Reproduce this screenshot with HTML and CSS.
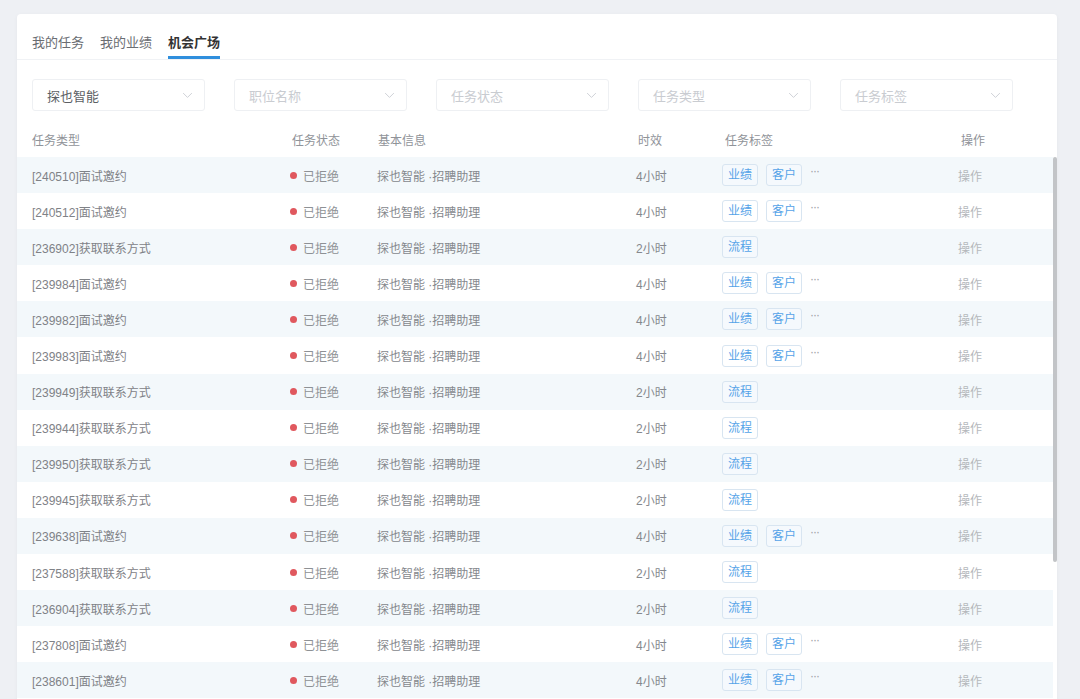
FILE: index.html
```html
<!DOCTYPE html>
<html lang="zh">
<head>
<meta charset="utf-8">
<link rel="stylesheet" href="styles.css">
</head>
<body>
<div class="card">
  <div class="tabs">
    <div class="tab">我的任务</div>
    <div class="tab">我的业绩</div>
    <div class="tab active">机会广场</div>
  </div>
  <div class="filters">
    <div class="select filled"><span>探也智能</span><svg class="chev" viewBox="0 0 12 8" width="11" height="7"><path d="M1 1.2 6 6.2 11 1.2" fill="none" stroke="#c8ccd1" stroke-width="1"/></svg></div>
    <div class="select"><span>职位名称</span><svg class="chev" viewBox="0 0 12 8" width="11" height="7"><path d="M1 1.2 6 6.2 11 1.2" fill="none" stroke="#c8ccd1" stroke-width="1"/></svg></div>
    <div class="select"><span>任务状态</span><svg class="chev" viewBox="0 0 12 8" width="11" height="7"><path d="M1 1.2 6 6.2 11 1.2" fill="none" stroke="#c8ccd1" stroke-width="1"/></svg></div>
    <div class="select"><span>任务类型</span><svg class="chev" viewBox="0 0 12 8" width="11" height="7"><path d="M1 1.2 6 6.2 11 1.2" fill="none" stroke="#c8ccd1" stroke-width="1"/></svg></div>
    <div class="select"><span>任务标签</span><svg class="chev" viewBox="0 0 12 8" width="11" height="7"><path d="M1 1.2 6 6.2 11 1.2" fill="none" stroke="#c8ccd1" stroke-width="1"/></svg></div>
  </div>
  <div class="thead">
    <div class="th">任务类型</div>
    <div class="th">任务状态</div>
    <div class="th">基本信息</div>
    <div class="th">时效</div>
    <div class="th">任务标签</div>
    <div class="th">操作</div>
  </div>
  <div class="tbody">
    <div class="rows">
      <div class="row alt"><div class="td type">[240510]面试邀约</div><div class="td status"><i class="dot"></i>已拒绝</div><div class="td info">探也智能 ·招聘助理</div><div class="td time">4小时</div><div class="td tags"><span class="tag">业绩</span><span class="tag">客户</span><span class="more">···</span></div><div class="td act">操作</div></div>
      <div class="row"><div class="td type">[240512]面试邀约</div><div class="td status"><i class="dot"></i>已拒绝</div><div class="td info">探也智能 ·招聘助理</div><div class="td time">4小时</div><div class="td tags"><span class="tag">业绩</span><span class="tag">客户</span><span class="more">···</span></div><div class="td act">操作</div></div>
      <div class="row alt"><div class="td type">[236902]获取联系方式</div><div class="td status"><i class="dot"></i>已拒绝</div><div class="td info">探也智能 ·招聘助理</div><div class="td time">2小时</div><div class="td tags"><span class="tag">流程</span></div><div class="td act">操作</div></div>
      <div class="row"><div class="td type">[239984]面试邀约</div><div class="td status"><i class="dot"></i>已拒绝</div><div class="td info">探也智能 ·招聘助理</div><div class="td time">4小时</div><div class="td tags"><span class="tag">业绩</span><span class="tag">客户</span><span class="more">···</span></div><div class="td act">操作</div></div>
      <div class="row alt"><div class="td type">[239982]面试邀约</div><div class="td status"><i class="dot"></i>已拒绝</div><div class="td info">探也智能 ·招聘助理</div><div class="td time">4小时</div><div class="td tags"><span class="tag">业绩</span><span class="tag">客户</span><span class="more">···</span></div><div class="td act">操作</div></div>
      <div class="row"><div class="td type">[239983]面试邀约</div><div class="td status"><i class="dot"></i>已拒绝</div><div class="td info">探也智能 ·招聘助理</div><div class="td time">4小时</div><div class="td tags"><span class="tag">业绩</span><span class="tag">客户</span><span class="more">···</span></div><div class="td act">操作</div></div>
      <div class="row alt"><div class="td type">[239949]获取联系方式</div><div class="td status"><i class="dot"></i>已拒绝</div><div class="td info">探也智能 ·招聘助理</div><div class="td time">2小时</div><div class="td tags"><span class="tag">流程</span></div><div class="td act">操作</div></div>
      <div class="row"><div class="td type">[239944]获取联系方式</div><div class="td status"><i class="dot"></i>已拒绝</div><div class="td info">探也智能 ·招聘助理</div><div class="td time">2小时</div><div class="td tags"><span class="tag">流程</span></div><div class="td act">操作</div></div>
      <div class="row alt"><div class="td type">[239950]获取联系方式</div><div class="td status"><i class="dot"></i>已拒绝</div><div class="td info">探也智能 ·招聘助理</div><div class="td time">2小时</div><div class="td tags"><span class="tag">流程</span></div><div class="td act">操作</div></div>
      <div class="row"><div class="td type">[239945]获取联系方式</div><div class="td status"><i class="dot"></i>已拒绝</div><div class="td info">探也智能 ·招聘助理</div><div class="td time">2小时</div><div class="td tags"><span class="tag">流程</span></div><div class="td act">操作</div></div>
      <div class="row alt"><div class="td type">[239638]面试邀约</div><div class="td status"><i class="dot"></i>已拒绝</div><div class="td info">探也智能 ·招聘助理</div><div class="td time">4小时</div><div class="td tags"><span class="tag">业绩</span><span class="tag">客户</span><span class="more">···</span></div><div class="td act">操作</div></div>
      <div class="row"><div class="td type">[237588]获取联系方式</div><div class="td status"><i class="dot"></i>已拒绝</div><div class="td info">探也智能 ·招聘助理</div><div class="td time">2小时</div><div class="td tags"><span class="tag">流程</span></div><div class="td act">操作</div></div>
      <div class="row alt"><div class="td type">[236904]获取联系方式</div><div class="td status"><i class="dot"></i>已拒绝</div><div class="td info">探也智能 ·招聘助理</div><div class="td time">2小时</div><div class="td tags"><span class="tag">流程</span></div><div class="td act">操作</div></div>
      <div class="row"><div class="td type">[237808]面试邀约</div><div class="td status"><i class="dot"></i>已拒绝</div><div class="td info">探也智能 ·招聘助理</div><div class="td time">4小时</div><div class="td tags"><span class="tag">业绩</span><span class="tag">客户</span><span class="more">···</span></div><div class="td act">操作</div></div>
      <div class="row alt"><div class="td type">[238601]面试邀约</div><div class="td status"><i class="dot"></i>已拒绝</div><div class="td info">探也智能 ·招聘助理</div><div class="td time">4小时</div><div class="td tags"><span class="tag">业绩</span><span class="tag">客户</span><span class="more">···</span></div><div class="td act">操作</div></div>
    </div>
    <div class="scrollbar"></div>
  </div>
</div>
</body>
</html>
```

FILE: styles.css
```css
html, body {
  margin: 0;
  padding: 0;
  height: 699px;
  overflow: hidden;
  background: #eef0f4;
  font-family: "Liberation Sans", "Noto Sans CJK SC", sans-serif;
}

.card {
  margin: 14px 23px 0 17px;
  background: #fff;
  border-radius: 4px 4px 0 0;
  box-shadow: 0 1px 4px rgba(0, 0, 0, 0.04);
  height: 700px;
}

.tabs {
  display: flex;
  gap: 15px;
  padding: 0 15px;
  height: 46px;
  border-bottom: 1px solid #f0f2f5;
  box-sizing: border-box;
}

.tab {
  font-size: 13px;
  line-height: 20px;
  color: #6a6d72;
  padding-top: 19px;
  height: 45px;
  box-sizing: border-box;
  border-bottom: 3px solid transparent;
}

.tab + .tab {
  margin-left: 1px;
}

.tab.active {
  color: #333;
  font-weight: bold;
  border-bottom-color: #2f8fdd;
}

.filters {
  display: flex;
  gap: 29px;
  padding: 19px 15px 0;
}

.select {
  width: 173px;
  height: 32px;
  box-sizing: border-box;
  border: 1px solid #eef0f3;
  border-radius: 3px;
  display: flex;
  align-items: center;
  justify-content: space-between;
  padding: 0 11px 0 14px;
  font-size: 13px;
  color: #c9ccd1;
}

.select.filled {
  color: #5c5f64;
}

.chev {
  display: block;
}

.thead {
  display: grid;
  grid-template-columns: 260px 86px 260px 87px 236px 1fr;
  height: 36px;
  align-items: center;
  padding-left: 15px;
  margin-top: 10px;
  font-size: 12px;
  color: #909399;
}

.tbody {
  display: flex;
}

.rows {
  flex: 1;
}

.row {
  display: grid;
  grid-template-columns: 258px 87px 259px 86px 236px 1fr;
  height: 36.1px;
  align-items: center;
  padding-left: 15px;
  font-size: 12px;
  color: #85888d;
}

.row.alt {
  background: #f3f8fb;
}

.td.type {
  color: #7f8287;
}

.status {
  display: flex;
  align-items: center;
  color: #8e9195;
}

.dot {
  width: 7px;
  height: 7px;
  border-radius: 50%;
  background: #e0585e;
  margin-right: 6px;
}

.info,
.time {
  color: #85888d;
}

.tags {
  display: flex;
  align-items: center;
}

.tag {
  display: inline-block;
  height: 22px;
  line-height: 20px;
  box-sizing: border-box;
  padding: 0 5px;
  border: 1px solid #d8e5f1;
  border-radius: 3px;
  color: #55a3e8;
  background: #fff;
  margin-right: 8px;
}

.row.alt .tag {
  background: #f5f9fd;
}

.more {
  color: #9ea2a6;
  font-size: 12px;
  letter-spacing: -1px;
  margin-top: -8px;
}

.act {
  color: #b5b8bc;
}

.scrollbar {
  width: 4px;
  height: 405px;
  background: #c2c4c7;
  border-radius: 2px;
}
```
